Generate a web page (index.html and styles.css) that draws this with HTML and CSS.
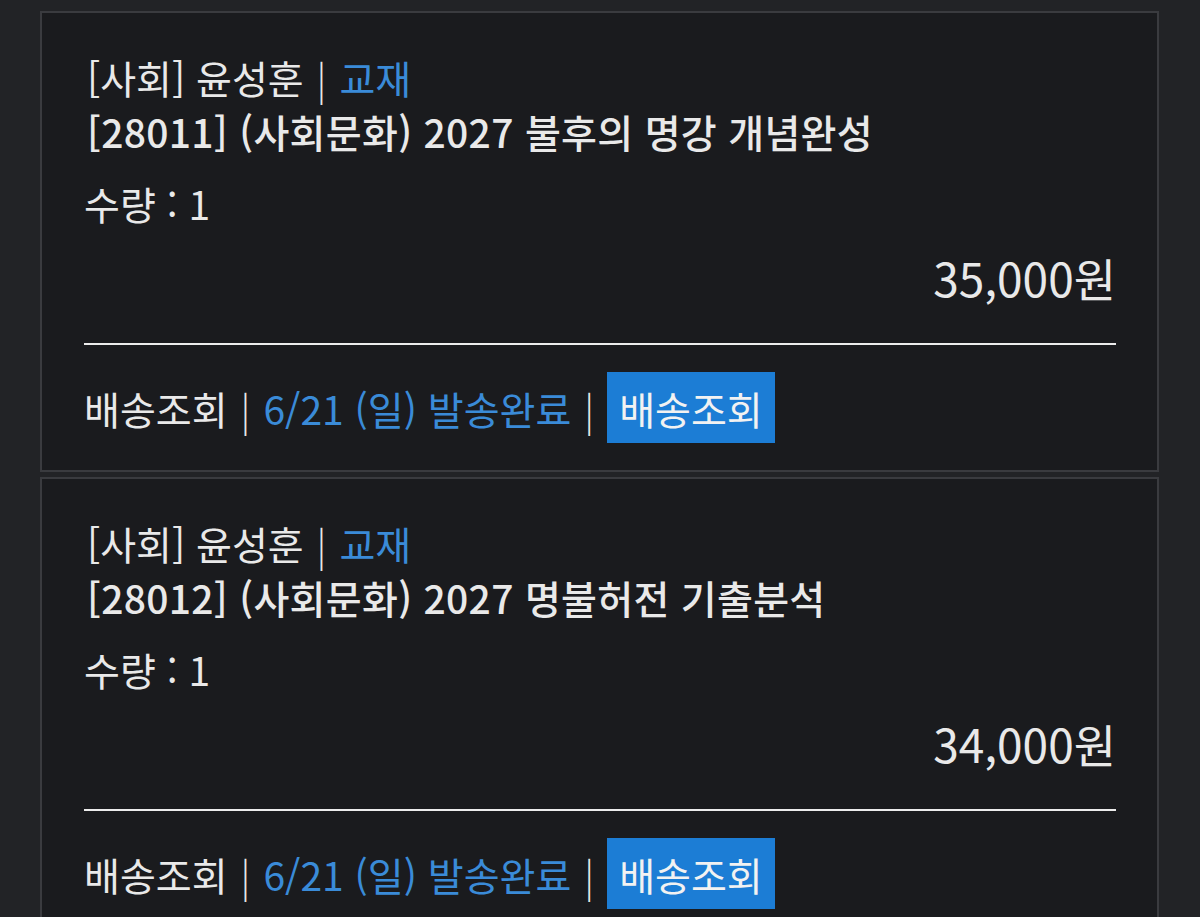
FILE: index.html
```html
<!DOCTYPE html>
<html lang="ko">
<head>
<meta charset="utf-8">
<title>주문 내역</title>
<link rel="stylesheet" href="styles.css">
</head>
<body>
<div class="list">
  <div class="card">
    <div class="meta">[사회] 윤성훈 <span class="bar">|</span> <span class="blue">교재</span></div>
    <div class="title">[28011] (사회문화) 2027 불후의 명강 개념완성</div>
    <div class="qty">수량 : 1</div>
    <div class="price">35,000원</div>
    <div class="rule"></div>
    <div class="foot">
      <span>배송조회</span><span class="bar">|</span><span class="blue">6/21 (일) 발송완료</span><span class="bar">|</span><span class="btn">배송조회</span>
    </div>
  </div>
  <div class="card">
    <div class="meta">[사회] 윤성훈 <span class="bar">|</span> <span class="blue">교재</span></div>
    <div class="title">[28012] (사회문화) 2027 명불허전 기출분석</div>
    <div class="qty">수량 : 1</div>
    <div class="price">34,000원</div>
    <div class="rule"></div>
    <div class="foot">
      <span>배송조회</span><span class="bar">|</span><span class="blue">6/21 (일) 발송완료</span><span class="bar">|</span><span class="btn">배송조회</span>
    </div>
  </div>
</div>
</body>
</html>
```
FILE: styles.css
```css
html, body {
  margin: 0;
  padding: 0;
  background: #222326;
}
body {
  font-family: "Noto Sans CJK KR", "Noto Sans", sans-serif;
  color: #e9e9e9;
  font-size: 39px;
}
.list {
  padding: 11px 41px 0 40px;
  display: flex;
  flex-direction: column;
  gap: 5px;
}
.card {
  background: #1a1b1e;
  border: 2px solid #3a3b3f;
  padding: 37px 41px 27px 42px;
  display: flex;
  flex-direction: column;
}
.meta, .title {
  line-height: 54px;
  padding-left: 3px;
  white-space: nowrap;
}
.meta .bar {
  margin: 0 2px;
}
.title {
  font-weight: 500;
  letter-spacing: 0.3px;
}
.qty {
  line-height: 54px;
  margin-top: 18px;
}
.price {
  line-height: 54px;
  margin-top: 20px;
  text-align: right;
  font-size: 46px;
}
.rule {
  height: 2px;
  background: #ececec;
  margin-top: 39px;
}
.foot {
  margin-top: 27px;
  display: flex;
  align-items: center;
  gap: 13px;
  height: 71px;
  white-space: nowrap;
}
.blue {
  color: #3a8bd8;
}
.bar {
  font-weight: 300;
}
.btn {
  background: #1c7dd5;
  color: #f2f2f2;
  height: 71px;
  padding: 0 12px;
  display: flex;
  align-items: center;
}
```
